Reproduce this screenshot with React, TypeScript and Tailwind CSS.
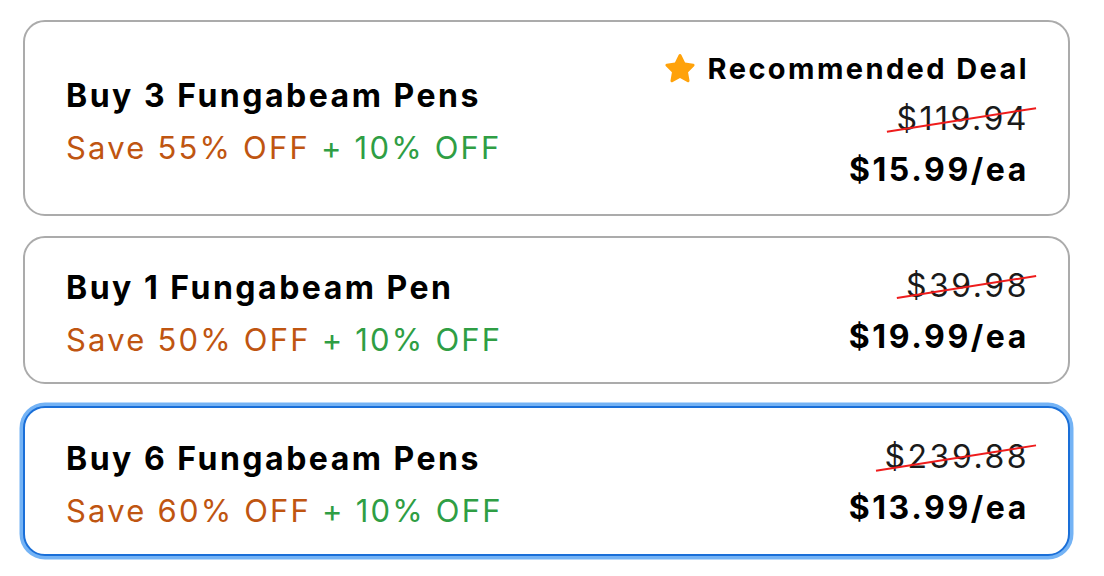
import React from 'react';

interface Deal {
  title: string;
  save: string;
  extra: string;
  oldPrice: string;
  price: string;
  recommended?: boolean;
  selected?: boolean;
}

const deals: Deal[] = [
  { title: 'Buy 3 Fungabeam Pens', save: 'Save 55% OFF', extra: '+ 10% OFF', oldPrice: '$119.94', price: '$15.99/ea', recommended: true },
  { title: 'Buy 1 Fungabeam Pen', save: 'Save 50% OFF', extra: '+ 10% OFF', oldPrice: '$39.98', price: '$19.99/ea' },
  { title: 'Buy 6 Fungabeam Pens', save: 'Save 60% OFF', extra: '+ 10% OFF', oldPrice: '$239.88', price: '$13.99/ea', selected: true },
];

const Star = () => (
  <svg width="38" height="38" viewBox="0 0 24 24" className="mr-[9px]">
    <path
      d="M12 2.6c.4 0 .7.2.9.6l2.3 4.7 5.2.8c.8.1 1.1 1.1.5 1.6l-3.8 3.7.9 5.2c.1.8-.7 1.4-1.4 1l-4.6-2.5-4.6 2.5c-.7.4-1.6-.2-1.4-1l.9-5.2-3.8-3.7c-.6-.6-.3-1.5.5-1.6l5.2-.8 2.3-4.7c.2-.4.5-.6.9-.6z"
      fill="#FFA20A"
    />
  </svg>
);

const DealCard = ({ deal }: { deal: Deal }) => (
  <div
    className={`flex items-center justify-between bg-white rounded-[22px] pl-[41px] pr-[39px] ${
      deal.selected
        ? 'border-[2.5px] border-[#1a6fd8] shadow-[0_0_0_3.5px_#74b3f5] h-[150px] mt-[2px]'
        : 'border-2 border-[#ababab]'
    } ${deal.recommended ? 'h-[196px]' : ''} ${!deal.recommended && !deal.selected ? 'h-[148px]' : ''}`}
  >
    <div className="flex flex-col pt-[8px]">
      <div className="text-[32px] leading-[52px] font-bold tracking-[2.5px] text-black">{deal.title}</div>
      <div className="text-[31px] leading-[52px] tracking-[2.2px]">
        <span className="text-[#bf5511]">{deal.save}</span>{' '}
        <span className="text-[#2f9e44]">{deal.extra}</span>
      </div>
    </div>
    <div className="flex flex-col items-end pt-[4px]">
      {deal.recommended && (
        <div className="flex items-center h-[50px] text-[29px] font-bold tracking-[2.4px] text-black">
          <Star />
          Recommended Deal
        </div>
      )}
      <div className="relative h-[50px] flex items-center text-[32px] tracking-[2.5px] text-[#1a1a1a]">
        {deal.oldPrice}
        <span className="absolute left-[-10px] right-[-8px] top-1/2 h-[2px] bg-[#ee1c1c] -rotate-[9deg]" />
      </div>
      <div className="h-[52px] flex items-center text-[32px] font-bold tracking-[2.6px] text-black">{deal.price}</div>
    </div>
  </div>
);

export default function App() {
  return (
    <div className="w-[1104px] h-[576px] bg-white pt-[20px] pl-[23px] font-['Inter','Liberation_Sans',sans-serif]">
      <div className="w-[1047px] flex flex-col gap-[20px]">
        {deals.map((d) => (
          <DealCard key={d.title} deal={d} />
        ))}
      </div>
    </div>
  );
}
